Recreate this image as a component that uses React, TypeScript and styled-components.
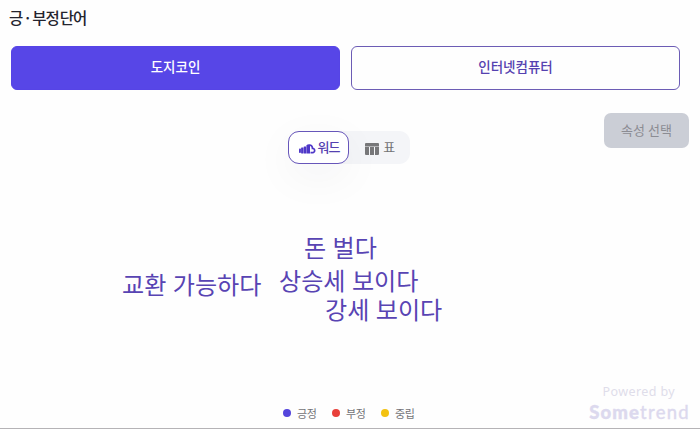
import React from "react";
import styled, { createGlobalStyle } from "styled-components";

const GlobalStyle = createGlobalStyle`
  * { box-sizing: border-box; }
  body {
    margin: 0;
    background: #fefefe;
    font-family: "Noto Sans CJK KR", "Noto Sans", sans-serif;
  }
  button { font-family: inherit; cursor: pointer; padding: 0; margin: 0; }
`;

const Panel = styled.main`
  display: flex;
  flex-direction: column;
  position: relative;
  width: 700px;
  height: 429px;
  overflow: hidden;
  border-bottom: 1px solid #b5b3b6;
`;

const Title = styled.h1`
  margin: 5px 0 1px 9px;
  height: 24px;
  font-size: 15.5px;
  line-height: 24px;
  font-weight: 500;
  letter-spacing: -1.1px;
  word-spacing: -1.2px;
  color: #24242e;
  white-space: nowrap;
`;

const KeywordTabs = styled.div`
  display: grid;
  grid-template-columns: 329px 329px;
  gap: 11px;
  margin: 16px 0 0 11px;
`;

const KeywordTab = styled.button<{ $active?: boolean }>`
  height: 44px;
  border: 1px solid ${(p) => (p.$active ? "#5644e6" : "#6c5cb5")};
  border-radius: 6px;
  background: ${(p) => (p.$active ? "#5746e7" : "#fefefe")};
  color: ${(p) => (p.$active ? "#fff" : "#5541b0")};
  font-size: 13.5px;
  font-weight: 500;
  line-height: 20px;
  padding-bottom: 4px;
`;

const Toolbar = styled.div`
  display: grid;
  grid-template-columns: 288px 122px 1fr;
  align-items: start;
  height: 84px;
  padding: 23px 11px 0 0;
`;

const ViewSwitch = styled.div`
  grid-column: 2;
  display: flex;
  height: 33px;
  margin-top: 18px;
  border-radius: 11px;
  background: #f4f5f8;
`;

const ViewButton = styled.button<{ $active?: boolean }>`
  display: flex;
  align-items: center;
  justify-content: center;
  gap: ${(p) => (p.$active ? "2px" : "4px")};
  width: 61px;
  height: 33px;
  padding: 0 0 2px 1px;
  border: 1px solid ${(p) => (p.$active ? "#6756ba" : "transparent")};
  border-radius: 11px;
  background: ${(p) => (p.$active ? "#fff" : "transparent")};
  box-shadow: ${(p) => (p.$active ? "0 12px 44px rgba(40, 40, 60, 0.05)" : "none")};
  color: ${(p) => (p.$active ? "#5541b0" : "#727275")};
  font-size: 13px;
  font-weight: ${(p) => (p.$active ? 500 : 400)};
  letter-spacing: ${(p) => (p.$active ? "-1px" : "-0.6px")};
  svg { margin-top: 5px; flex: none; }
`;

const AttributeButton = styled.button`
  justify-self: end;
  width: 85px;
  height: 35px;
  padding-bottom: 2px;
  border: 0;
  border-radius: 7px;
  background: #cbced6;
  color: #8b8c93;
  font-size: 13px;
  line-height: 20px;
`;

const Cloud = styled.section`
  position: relative;
  flex: 1;
`;

const Word = styled.span<{ $x: number; $y: number }>`
  position: absolute;
  left: ${(p) => p.$x}px;
  top: ${(p) => p.$y}px;
  font-size: 24.1px;
  line-height: 28px;
  word-spacing: 1px;
  color: #5844b3;
  white-space: nowrap;
`;

const Legend = styled.footer`
  display: flex;
  align-items: center;
  gap: 15.5px;
  height: 20px;
  margin: 0 0 5px 283px;
`;

const LegendItem = styled.span<{ $color: string }>`
  display: flex;
  align-items: center;
  gap: 6px;
  font-size: 11px;
  letter-spacing: -0.4px;
  line-height: 16px;
  color: #737377;
  &::before {
    content: "";
    width: 8px;
    height: 8px;
    border-radius: 50%;
    background: ${(p) => p.$color};
  }
`;

const Credit = styled.div`
  position: absolute;
  right: 11px;
  bottom: 5px;
  display: flex;
  flex-direction: column;
  align-items: flex-end;
  white-space: nowrap;
`;

const PoweredBy = styled.span`
  margin-right: 14px;
  font-family: "Noto Sans", sans-serif;
  font-size: 12.5px;
  line-height: 18px;
  letter-spacing: 0.4px;
  color: #dfddea;
`;

const Brand = styled.span`
  font-family: Lato, sans-serif;
  font-size: 18.5px;
  line-height: 22px;
  letter-spacing: 1.3px;
  margin-right: -1px;
  font-weight: 400;
  -webkit-text-stroke: 0.4px #dcd9ee;
  color: #dcd9ee;
  b { font-weight: 900; letter-spacing: 1.1px; }
`;

const CloudIcon = () => (
  <svg width="17" height="10" viewBox="0 0 17 10" fill="#4e37c8">
    <rect x="0" y="4.5" width="1.9" height="4.5" rx=".8" />
    <rect x="2.1" y="3.6" width="2.4" height="5.8" rx=".4" />
    <rect x="4.7" y="2.6" width="2.5" height="6.8" rx=".3" />
    <path d="M7.4 1.2C8.2.4 9.3.1 10.6.2c2.1.1 3.6 1.6 3.7 3.6 1.3.3 2.2 1.3 2.2 2.7 0 1.7-1.2 2.9-2.8 2.9h-2.2V7.8h2c.8 0 1.3-.5 1.3-1.3s-.5-1.3-1.5-1.3h-.7V4c0-1-.7-1.9-1.6-2.1v7.5H7.4Z" />
  </svg>
);

const TableIcon = () => (
  <svg width="14" height="12" viewBox="0 0 14 12" fill="#777779">
    <path d="M1 0h12a1 1 0 0 1 1 1v2.4H0V1a1 1 0 0 1 1-1ZM0 4h4v8H1a1 1 0 0 1-1-1ZM5 4h4v8H5ZM10 4h4v7a1 1 0 0 1-1 1h-3Z" />
  </svg>
);

const words = [
  { text: "돈 벌다", x: 304, y: 59 },
  { text: "교환 가능하다", x: 122, y: 96 },
  { text: "상승세 보이다", x: 279, y: 92 },
  { text: "강세 보이다", x: 325, y: 121 },
];

const sentiments = [
  { label: "긍정", color: "#5445dc" },
  { label: "부정", color: "#e8403a" },
  { label: "중립", color: "#f3c211" },
];

export default function App() {
  return (
    <>
      <GlobalStyle />
      <Panel>
        <Title>긍 · 부정 단어</Title>
        <KeywordTabs>
          <KeywordTab $active>도지코인</KeywordTab>
          <KeywordTab>인터넷컴퓨터</KeywordTab>
        </KeywordTabs>
        <Toolbar>
          <ViewSwitch>
            <ViewButton $active><CloudIcon />워드</ViewButton>
            <ViewButton><TableIcon />표</ViewButton>
          </ViewSwitch>
          <AttributeButton>속성 선택</AttributeButton>
        </Toolbar>
        <Cloud>
          {words.map((w) => (
            <Word key={w.text} $x={w.x} $y={w.y}>{w.text}</Word>
          ))}
        </Cloud>
        <Legend>
          {sentiments.map((s) => (
            <LegendItem key={s.label} $color={s.color}>{s.label}</LegendItem>
          ))}
        </Legend>
        <Credit>
          <PoweredBy>Powered by</PoweredBy>
          <Brand><b>Some</b>trend</Brand>
        </Credit>
      </Panel>
    </>
  );
}
